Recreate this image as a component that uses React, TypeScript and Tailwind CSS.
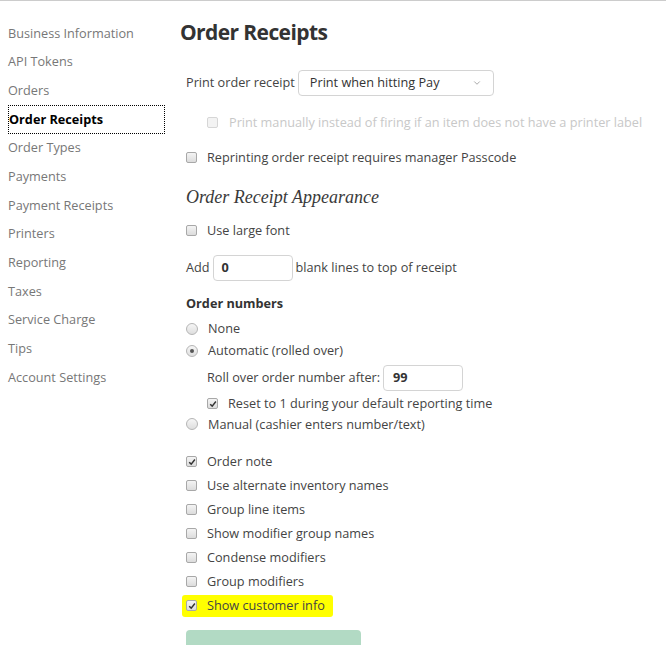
import { ChevronDown } from 'lucide-react';

const navItems = [
  'Business Information',
  'API Tokens',
  'Orders',
  'Order Receipts',
  'Order Types',
  'Payments',
  'Payment Receipts',
  'Printers',
  'Reporting',
  'Taxes',
  'Service Charge',
  'Tips',
  'Account Settings',
];

function Box({ checked = false, faded = false }: { checked?: boolean; faded?: boolean }) {
  return (
    <span
      className={`relative inline-flex h-[11px] w-[11px] shrink-0 items-center justify-center rounded-[2px] border ${
        faded ? 'border-[#d6d6d6] bg-[#f3f3f3]' : 'border-[#a8a8a8] bg-gradient-to-b from-[#f4f4f4] to-[#dcdcdc]'
      }`}
    >
      {checked && (
        <svg viewBox="0 0 10 10" className="h-[8px] w-[8px]">
          <path d="M1.5 5.2 L4 7.6 L8.6 1.8" fill="none" stroke="#333" strokeWidth="1.8" />
        </svg>
      )}
    </span>
  );
}

function Radio({ checked = false }: { checked?: boolean }) {
  return (
    <span className="inline-flex h-[12px] w-[12px] shrink-0 items-center justify-center rounded-full border border-[#b5b5b5] bg-gradient-to-b from-[#f6f6f6] to-[#dedede]">
      {checked && <span className="h-[4px] w-[4px] rounded-full bg-[#555]" />}
    </span>
  );
}

function CheckRow({ label, checked = false }: { label: string; checked?: boolean }) {
  return (
    <div className="flex h-[24px] items-center gap-[10px]">
      <Box checked={checked} />
      <span>{label}</span>
    </div>
  );
}

export default function App() {
  return (
    <div className="h-[645px] w-[666px] overflow-hidden border-t border-[#cccccc] bg-white font-['Open_Sans',sans-serif] text-[12.7px] text-[#444]">
      <div className="flex">
        <nav className="w-[165px] shrink-0 pl-[8px] pt-[18px]">
          {navItems.map((item) => (
            <div
              key={item}
              className={`flex h-[28.67px] items-center ${
                item === 'Order Receipts'
                  ? 'border border-dotted border-black font-bold text-black'
                  : 'text-[#777]'
              }`}
            >
              {item}
            </div>
          ))}
        </nav>

        <main className="flex-1 pl-[15px]">
          <h1 className="mt-[16px] text-[21px] font-bold tracking-[-0.6px] text-[#333]">Order Receipts</h1>

          <div className="ml-[6px]">
            <div className="mt-[21px] flex items-center gap-[3px]">
              <span>Print order receipt</span>
              <div className="flex h-[26px] w-[196px] items-center justify-between rounded-[4px] border border-[#d4d4d4] px-[11px]">
                <span className="text-[#333]">Print when hitting Pay</span>
                <ChevronDown className="h-[10px] w-[10px] text-[#999]" strokeWidth={2} />
              </div>
            </div>

            <div className="mt-[15px] flex h-[24px] items-center gap-[11px] pl-[21px] text-[#c8c8c8]">
              <Box faded />
              <span>Print manually instead of firing if an item does not have a printer label</span>
            </div>

            <div className="mt-[11px]">
              <CheckRow label="Reprinting order receipt requires manager Passcode" />
            </div>

            <h2 className="mt-[14px] font-['Liberation_Serif',serif] text-[18px] italic text-[#3a3a3a]">
              Order Receipt Appearance
            </h2>

            <div className="mt-[8px]">
              <CheckRow label="Use large font" />
            </div>

            <div className="mt-[12px] flex items-center gap-[3px]">
              <span>Add</span>
              <div className="flex h-[26px] w-[80px] items-center rounded-[4px] border border-[#d4d4d4] px-[8px] font-bold text-[#333]">
                0
              </div>
              <span>blank lines to top of receipt</span>
            </div>

            <div className="mt-[13px] font-bold text-[#333]">Order numbers</div>

            <div className="mt-[5px] flex h-[22px] items-center gap-[10px]">
              <Radio />
              <span>None</span>
            </div>
            <div className="flex h-[22px] items-center gap-[10px]">
              <Radio checked />
              <span>Automatic (rolled over)</span>
            </div>
            <div className="mt-[3px] flex items-center gap-[3px] pl-[21px]">
              <span>Roll over order number after:</span>
              <div className="flex h-[26px] w-[80px] items-center rounded-[4px] border border-[#d4d4d4] px-[9px] font-bold text-[#333]">
                99
              </div>
            </div>
            <div className="flex h-[26px] items-center gap-[10px] pl-[21px]">
              <Box checked />
              <span>Reset to 1 during your default reporting time</span>
            </div>
            <div className="flex h-[15px] items-center gap-[10px]">
              <Radio />
              <span>Manual (cashier enters number/text)</span>
            </div>

            <div className="mt-[18px] flex flex-col">
              <CheckRow label="Order note" checked />
              <CheckRow label="Use alternate inventory names" />
              <CheckRow label="Group line items" />
              <CheckRow label="Show modifier group names" />
              <CheckRow label="Condense modifiers" />
              <CheckRow label="Group modifiers" />
              <div className="-ml-[4px] my-[1px] flex h-[22px] w-[151px] items-center gap-[10px] rounded-[3px] bg-[#ffff00] pl-[4px]">
                <Box checked />
                <span>Show customer info</span>
              </div>
            </div>

            <button className="mt-[12px] h-[36px] w-[175px] rounded-[4px] bg-[#b2dac4] pt-[4px] text-[14px] text-white">
              Save
            </button>
          </div>
        </main>
      </div>
    </div>
  );
}
